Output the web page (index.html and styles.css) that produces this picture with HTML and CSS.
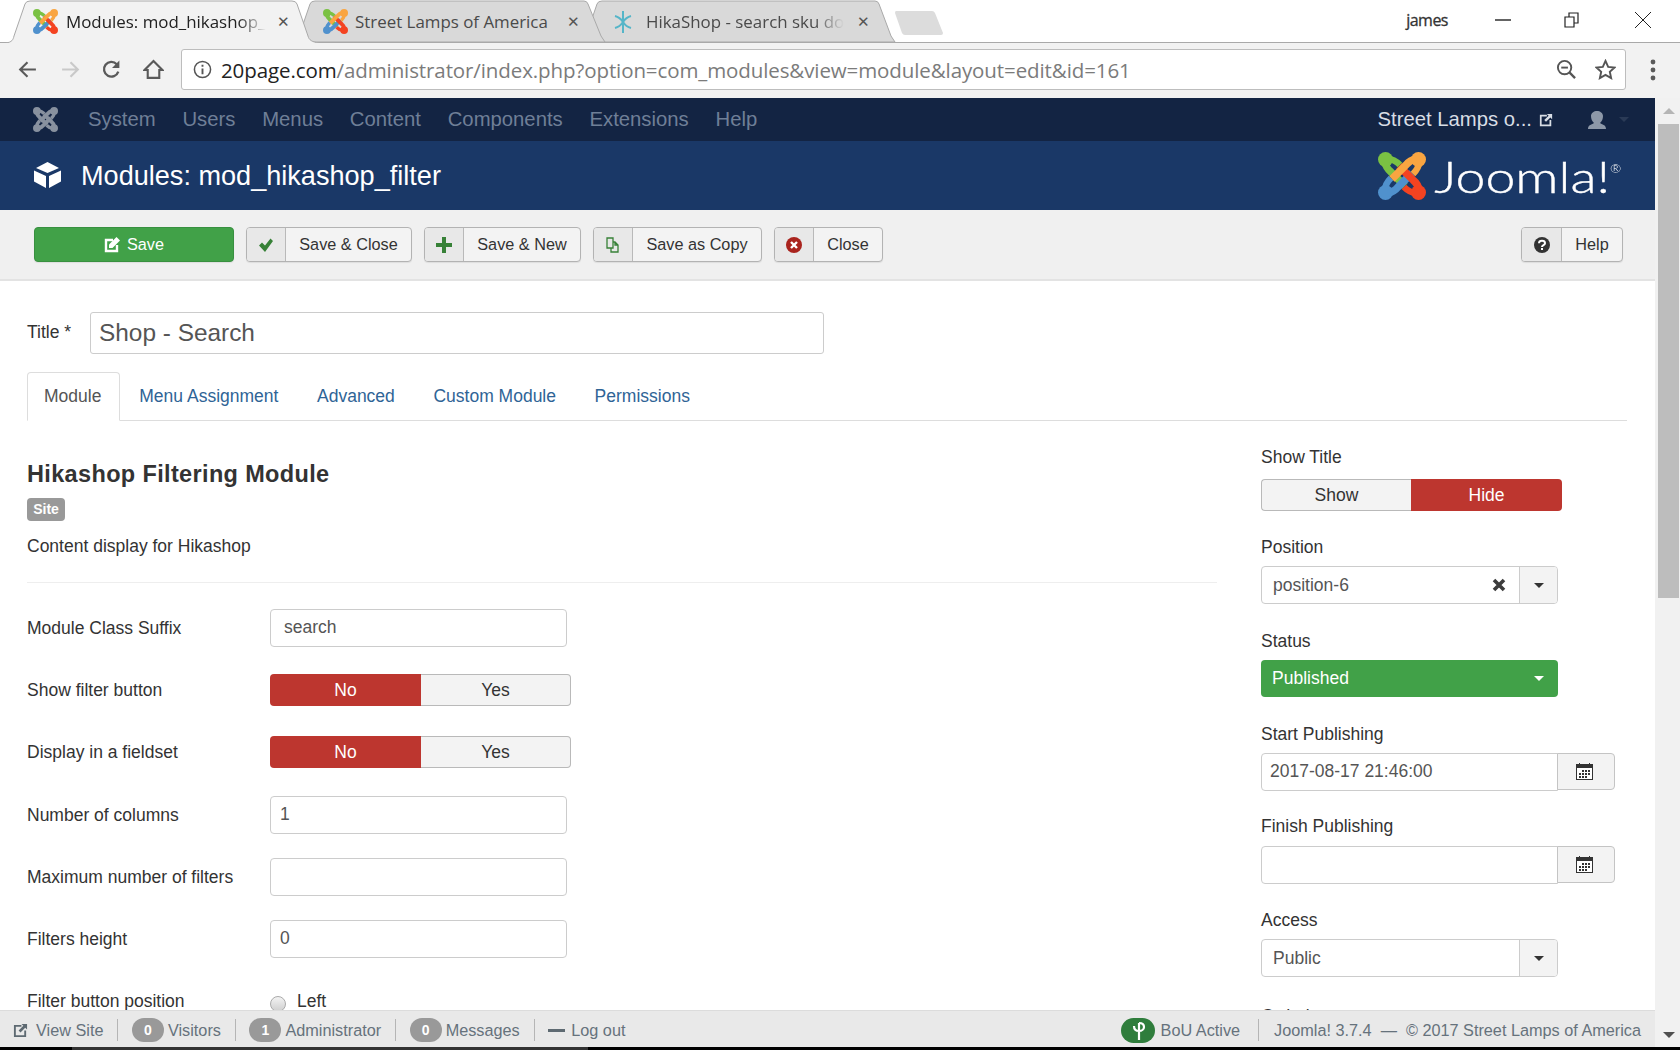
FILE: index.html
```html
<!DOCTYPE html>
<html lang="en">
<head>
<meta charset="utf-8">
<title>Modules: mod_hikashop_filter</title>
<link rel="stylesheet" href="styles.css">
</head>
<body>
<svg class="defs" width="0" height="0" aria-hidden="true">
  <symbol id="jpiece" viewBox="0 0 48 48">
    <circle cx="7.500" cy="7.500" r="7.500" fill="currentColor"/>
    <path d="M7 10 Q8 16 13 20 L27 34" fill="none" stroke="currentColor" stroke-width="7.500"/>
    <path d="M10 7 Q16 7 22 13" fill="none" stroke="currentColor" stroke-width="6.500"/>
  </symbol>
  <symbol id="jmark" viewBox="0 0 48 48">
    <g class="jm-a"><use href="#jpiece" width="48" height="48"/></g>
    <g class="jm-d" transform="rotate(270 24 24)"><use href="#jpiece" width="48" height="48"/></g>
    <g class="jm-c" transform="rotate(180 24 24)"><use href="#jpiece" width="48" height="48"/></g>
    <g class="jm-b" transform="rotate(90 24 24)"><use href="#jpiece" width="48" height="48"/></g>
  </symbol>
  <symbol id="cal" viewBox="0 0 17 17">
    <path fill="#333" d="M0 1h3V0h1v1h9V0h1v1h3v16H0z"/>
    <rect x="1" y="5" width="15" height="11" fill="#fff"/>
    <path fill="#333" d="M6 7h2v2H6zM9 7h2v2H9zM12 7h2v2h-2zM3 10h2v2H3zM6 10h2v2H6zM9 10h2v2H9zM12 10h2v2h-2zM3 13h2v2H3zM6 13h2v2H6zM9 13h2v2H9z"/>
  </symbol>
  <symbol id="ext" viewBox="0 0 16 16">
    <path fill="none" stroke="currentColor" stroke-width="2" d="M9 3H2v11h11V8"/>
    <path fill="currentColor" d="M9 1h6v6l-2-2-5 5-2-2 5-5z"/>
  </symbol>
</svg>

<header class="tabstrip">
  <div class="tab tab-first">
    <svg class="tab-shape" viewBox="0 0 313 43" preserveAspectRatio="none"><path d="M0 43 C6 42 7 40 8 36 L19 4 Q20 1 24 1 H286 Q290 1 291 4 L302 36 C303 40 306 42 313 43" fill="#f2f2f2" stroke="#a9a9a9"/></svg>
    <svg class="fav"><use href="#jmark"/></svg>
    <span class="tab-title dark">Modules: mod_hikashop_</span>
    <span class="tab-x">&#x2715;</span>
  </div>
  <div class="tab tab-second">
    <svg class="tab-shape" viewBox="0 0 312 43" preserveAspectRatio="none"><path d="M2 42 L15 4 Q16 1 20 1 H289 Q292 1 293 4 L306 36 L310 42 Z" fill="#d9d9d9" stroke="#a9a9a9"/></svg>
    <svg class="fav"><use href="#jmark"/></svg>
    <span class="tab-title">Street Lamps of America</span>
    <span class="tab-x">&#x2715;</span>
  </div>
  <div class="tab tab-third">
    <svg class="tab-shape" viewBox="0 0 315 43" preserveAspectRatio="none"><path d="M2 42 L15 4 Q16 1 20 1 H293 Q296 1 297 4 L309 36 L313 42 Z" fill="#d9d9d9" stroke="#a9a9a9"/></svg>
    <svg class="fav fav-star" viewBox="0 0 20 24"><path d="M10 1v22M2 6c4 1 6 3 8 6s4 5 8 6M18 6c-4 1-6 3-8 6s-4 5-8 6" fill="none" stroke="#55b5c8" stroke-width="2"/></svg>
    <span class="tab-title tab-fade">HikaShop - search sku do</span>
    <span class="tab-x">&#x2715;</span>
  </div>
  <svg class="newtab" viewBox="0 0 50 26"><path d="M2 1H38Q40 1 41 3L49 23Q49 25 47 25H11Q9 25 8 23L1 3Q1 1 2 1Z" fill="#dcdcdc"/></svg>
  <div class="winctl">
    <span class="james">james</span>
    <svg class="win-min" viewBox="0 0 16 16"><path d="M0 8h16" stroke="#222" stroke-width="1.400"/></svg>
    <svg class="win-max" viewBox="0 0 16 16"><path d="M1 5h9v10H1zM5 5V1h9v10h-4" fill="none" stroke="#222" stroke-width="1.200"/></svg>
    <svg class="win-close" viewBox="0 0 16 16"><path d="M0 0l16 16M16 0L0 16" stroke="#222" stroke-width="1"/></svg>
  </div>
</header>

<div class="omnibar">
  <svg class="nav-ic" viewBox="0 0 20 20"><path d="M18 10H3M10 3l-7 7 7 7" fill="none" stroke="#5a5a5a" stroke-width="2"/></svg>
  <svg class="nav-ic" viewBox="0 0 20 20"><path d="M2 10h15M10 3l7 7-7 7" fill="none" stroke="#c9c9c9" stroke-width="2"/></svg>
  <svg class="nav-ic" viewBox="0 0 20 20"><path d="M16.500 12a7 7 0 1 1-1.500-7" fill="none" stroke="#5a5a5a" stroke-width="2.200"/><path d="M17.500 1.500v7h-7z" fill="#5a5a5a"/></svg>
  <svg class="nav-ic" viewBox="0 0 20 20"><path d="M10 2L1.500 10.500H4.500V18H15.500V10.500H18.500Z" fill="none" stroke="#5a5a5a" stroke-width="2"/></svg>
  <div class="urlbox">
    <svg class="url-info" viewBox="0 0 20 20"><circle cx="10" cy="10" r="8.500" fill="none" stroke="#555" stroke-width="1.600"/><path d="M10 9v6M10 5v2" stroke="#555" stroke-width="2"/></svg>
    <span class="url"><span class="url-host">20page.com</span>/administrator/index.php?option=com_modules&amp;view=module&amp;layout=edit&amp;id=161</span>
    <svg class="url-ic" viewBox="0 0 22 22"><circle cx="9" cy="9" r="7" fill="none" stroke="#555" stroke-width="2"/><path d="M14 14l6 6" stroke="#555" stroke-width="2.400"/><path d="M5.500 9h7" stroke="#555" stroke-width="2"/></svg>
    <svg class="url-ic" viewBox="0 0 22 22"><path d="M11 2l2.800 6.200 6.700.7-5 4.500 1.400 6.600-5.900-3.400-5.900 3.400 1.400-6.600-5-4.500 6.700-.7z" fill="none" stroke="#555" stroke-width="2"/></svg>
  </div>
  <svg class="kebab" viewBox="0 0 6 24"><circle cx="3" cy="4" r="2.400"/><circle cx="3" cy="12" r="2.400"/><circle cx="3" cy="20" r="2.400"/></svg>
</div>

<div class="viewport">
  <div class="page">
    <nav class="topnav">
      <svg class="nav-mark"><use href="#jmark"/></svg>
      <ul class="menu">
        <li>System</li><li>Users</li><li>Menus</li><li>Content</li><li>Components</li><li>Extensions</li><li>Help</li>
      </ul>
      <div class="nav-right">
        <span class="site-link">Street Lamps o...</span>
        <svg class="site-ext"><use href="#ext"/></svg>
        <svg class="user-ic" viewBox="0 0 18 18"><path d="M0 18c0-4 3-4 6-6-2-2-3-4-3-7 0-3 3-5 6-5s6 2 6 5c0 3-1 5-3 7 3 2 6 2 6 6z" fill="#8d98a8"/></svg>
        <span class="user-caret"></span>
      </div>
    </nav>

    <div class="titlebar">
      <svg class="cube" viewBox="0 0 27 26"><path fill="#fff" d="M13.500 0L25 6 13.500 11 2 6zM0 8.500l12 5.500V26L0 19.500zM27 8.500L15 14V26l12-6.500z"/></svg>
      <h1 class="page-title">Modules: mod_hikashop_filter</h1>
      <div class="brand">
        <svg class="brand-mark"><use href="#jmark"/></svg>
        <span class="brand-word">Joomla!<sup class="brand-r">®</sup></span>
      </div>
    </div>

    <div class="actions">
      <button class="btn btn-save" type="button">
        <svg class="ic14" viewBox="0 0 16 16"><path fill="none" stroke="#fff" stroke-width="2.400" d="M9 3H2v11h11V8"/><path fill="#fff" d="M12.500 0L16 3.500 8.500 11H5V7.500z"/></svg>
        Save
      </button>
      <button class="btn btn-close-save" type="button"><span class="btn-ic"><svg class="ic16" viewBox="0 0 16 16"><path fill="#378137" d="M1 8.500l3-3 3 3 5.500-7L15 4 7 15z"/></svg></span><span class="btn-t">Save &amp; Close</span></button>
      <button class="btn btn-new" type="button"><span class="btn-ic"><svg class="ic16" viewBox="0 0 16 16"><path fill="#378137" d="M6 0h4v6h6v4h-6v6H6v-6H0V6h6z"/></svg></span><span class="btn-t">Save &amp; New</span></button>
      <button class="btn btn-copy" type="button"><span class="btn-ic"><svg class="ic16" viewBox="0 0 16 16"><path fill="none" stroke="#378137" stroke-width="1.300" d="M2 1h6v10H2zM8 5h2l3 3v7H6v-4M10 5v3h3"/></svg></span><span class="btn-t">Save as Copy</span></button>
      <button class="btn btn-close" type="button"><span class="btn-ic"><svg class="ic16" viewBox="0 0 16 16"><circle cx="8" cy="8" r="8" fill="#a9231d"/><path d="M5 5l6 6M11 5l-6 6" stroke="#fff" stroke-width="2.400"/></svg></span><span class="btn-t">Close</span></button>
      <button class="btn btn-help" type="button"><span class="btn-ic"><svg class="ic16" viewBox="0 0 16 16"><circle cx="8" cy="8" r="8" fill="#333"/><path d="M5 6.200C5 3 11 3 11 6.200 11 8.200 8 8 8 10" fill="none" stroke="#fff" stroke-width="2"/><rect x="7" y="11" width="2" height="2" fill="#fff"/></svg></span><span class="btn-t">Help</span></button>
    </div>

    <main class="content">
      <div class="title-row">
        <label class="title-label">Title *</label>
        <div class="title-input">Shop - Search</div>
      </div>

      <div class="tabs">
        <span class="ctab active">Module</span>
        <span class="ctab">Menu Assignment</span>
        <span class="ctab">Advanced</span>
        <span class="ctab">Custom Module</span>
        <span class="ctab">Permissions</span>
      </div>

      <div class="columns">
        <section class="col-main">
          <h3 class="mod-name">Hikashop Filtering Module</h3>
          <span class="badge-site">Site</span>
          <p class="mod-desc">Content display for Hikashop</p>
          <hr class="rule">
          <div class="form">
            <div class="row"><label>Module Class Suffix</label><div class="input pad-wide">search</div></div>
            <div class="row"><label>Show filter button</label><div class="toggle"><span class="seg on-no">No</span><span class="seg off">Yes</span></div></div>
            <div class="row"><label>Display in a fieldset</label><div class="toggle"><span class="seg on-no">No</span><span class="seg off">Yes</span></div></div>
            <div class="row row-shift"><label>Number of columns</label><div class="input">1</div></div>
            <div class="row"><label>Maximum number of filters</label><div class="input"></div></div>
            <div class="row"><label>Filters height</label><div class="input">0</div></div>
            <div class="row"><label>Filter button position</label><div class="radio-line"><span class="radio"></span><span>Left</span></div></div>
          </div>
        </section>

        <aside class="col-side">
          <div class="field"><div class="flabel flabel-toggle">Show Title</div>
            <div class="toggle"><span class="seg off">Show</span><span class="seg on-no">Hide</span></div></div>
          <div class="field field-wide"><div class="flabel">Position</div>
            <div class="select"><span class="sel-text">position-6</span><svg class="sel-x" viewBox="0 0 14 14"><path d="M2 2l10 10M12 2L2 12" stroke="#3c3c3c" stroke-width="3.600"/></svg><span class="sel-btn"><i class="caret"></i></span></div></div>
          <div class="field field-wide"><div class="flabel">Status</div>
            <div class="select-green"><span>Published</span><i class="caret caret-white"></i></div></div>
          <div class="field field-tight"><div class="flabel">Start Publishing</div>
            <div class="date"><div class="date-input">2017-08-17 21:46:00</div><span class="date-btn"><svg class="ic-cal"><use href="#cal"/></svg></span></div></div>
          <div class="field"><div class="flabel flabel-date">Finish Publishing</div>
            <div class="date"><div class="date-input"></div><span class="date-btn"><svg class="ic-cal"><use href="#cal"/></svg></span></div></div>
          <div class="field field-access"><div class="flabel">Access</div>
            <div class="select"><span class="sel-text">Public</span><span class="sel-btn"><i class="caret"></i></span></div></div>
          <div class="field"><div class="flabel">Ordering</div></div>
        </aside>
      </div>
    </main>
  </div>

  <div class="scrollbar">
    <span class="sb-up"></span>
    <span class="sb-thumb"></span>
    <span class="sb-down"></span>
  </div>

  <footer class="status">
    <svg class="st-ext"><use href="#ext"/></svg>
    <span class="st-text">View Site</span>
    <span class="st-sep"></span>
    <span class="st-badge">0</span><span class="st-text">Visitors</span>
    <span class="st-sep"></span>
    <span class="st-badge">1</span><span class="st-text">Administrator</span>
    <span class="st-sep"></span>
    <span class="st-badge">0</span><span class="st-text">Messages</span>
    <span class="st-sep"></span>
    <span class="st-minus"></span><span class="st-text">Log out</span>
    <span class="st-right">
      <svg class="bou" viewBox="0 0 34 25"><rect width="34" height="25" rx="12.500" fill="#2f7d3c"/><path d="M18 22V5M18 5c4 0 5 2 5 4s-2 4-5 4c-3 0-5-2-5-5" fill="none" stroke="#fff" stroke-width="2.200"/></svg>
      <span class="st-text">BoU Active</span>
      <span class="st-sep st-sep-right"></span>
      <span class="st-text">Joomla! 3.7.4 &nbsp;—&nbsp; © 2017 Street Lamps of America</span>
    </span>
  </footer>
</div>
<div class="taskbar"><span class="taskbar-seg"></span></div>
</body>
</html>
```

FILE: styles.css
```css
* { box-sizing: border-box; }
html, body { margin: 0; padding: 0; }
body {
  width: 1680px; height: 1050px; overflow: hidden;
  display: flex; flex-direction: column;
  font-family: "Liberation Sans", Arial, sans-serif;
  font-size: 17.500px; color: #333; background: #fff;
}
.defs { position: absolute; }
.jm-a { color: var(--a, #7ac143); }
.jm-b { color: var(--b, #f9a541); }
.jm-c { color: var(--c, #f44321); }
.jm-d { color: var(--d, #5091cd); }

/* browser tabs */
.tabstrip { height: 43px; flex: none; display: flex; align-items: stretch; background: #fff; position: relative; border-bottom: 1px solid #a9a9a9; padding-left: 6px; font-family: "Open Sans", sans-serif; }
.tab { position: relative; display: flex; align-items: center; height: 43px; }
.tab-shape { position: absolute; inset: 0; width: 100%; height: 100%; }
.tab > .fav, .tab > span { position: relative; }
.tab-first { width: 313px; padding-left: 27px; z-index: 3; }
.tab-second { width: 312px; margin-left: -24px; padding-left: 28px; z-index: 2; }
.tab-third { width: 315px; margin-left: -25px; padding-left: 31px; z-index: 1; }
.fav { width: 25px; height: 25px; flex: none; }
.fav-star { width: 20px; height: 24px; }
.tab-title { font-size: 16.900px; color: #4a4a4a; white-space: nowrap; margin-left: 9px; flex: none; }
.tab-title.dark { color: #222; margin-left: 8px; }
.tab-first .tab-title { width: 200px; -webkit-mask-image: linear-gradient(90deg, #000 86%, transparent); mask-image: linear-gradient(90deg, #000 86%, transparent); }
.tab-second .tab-title { width: 200px; margin-left: 7px; }
.tab-third .tab-title { width: 198px; margin-left: 13px; overflow: hidden; -webkit-mask-image: linear-gradient(90deg, #000 85%, transparent); mask-image: linear-gradient(90deg, #000 85%, transparent); }
.tab-x { font-family: "DejaVu Sans", sans-serif; font-size: 15px; color: #555; margin-left: 11px; }
.tab-second .tab-x { margin-left: 12px; }
.tab-third .tab-x { margin-left: 13px; }
.newtab { width: 50px; height: 26px; margin: 10px 0 0 -3px; flex: none; }
.winctl { margin-left: auto; display: flex; align-items: center; height: 40px; }
.james { font-family: "Open Sans", sans-serif; font-size: 16px; letter-spacing: -0.500px; color: #333; -webkit-text-stroke: 0.300px #333; margin-right: 47px; }
.win-min { width: 16px; height: 16px; margin-right: 53px; }
.win-max { width: 16px; height: 16px; margin-right: 55px; }
.win-close { width: 16px; height: 16px; margin-right: 29px; }

/* omnibar */
.omnibar { height: 55px; flex: none; background: #f2f2f2; display: flex; align-items: center; padding: 0 0 2px 17px; }
.nav-ic { width: 21px; height: 21px; flex: none; margin-right: 22px; }
.nav-ic:nth-child(2) { margin-right: 20px; }
.nav-ic:nth-child(3) { margin-right: 21px; }
.nav-ic:nth-child(4) { margin-right: 17px; }
.urlbox { width: 1445px; height: 41px; background: #fff; border: 1px solid #bdbdbd; border-radius: 3px; display: flex; align-items: center; padding: 0 9px 0 11px; margin-right: 24px; flex: none; }
.url-info { width: 19px; height: 19px; flex: none; margin-right: 9px; }
.url { font-family: "Open Sans", sans-serif; font-size: 20.500px; color: #7b7b7b; white-space: nowrap; flex: 1; letter-spacing: -0.100px; }
.url-host { color: #222; }
.url-ic { width: 21px; height: 21px; flex: none; margin-left: 18px; }
.kebab { width: 6px; height: 24px; fill: #5a5a5a; flex: none; }

/* viewport */
.viewport { flex: 1; min-height: 0; display: flex; position: relative; overflow: hidden; }
.page { width: 1655px; flex: none; display: flex; flex-direction: column; overflow: hidden; }
.scrollbar { width: 25px; flex: none; background: #f1f1f1; display: flex; flex-direction: column; align-items: center; padding-left: 2px; position: relative; }
.sb-up { height: 26px; flex: none; display: flex; align-items: center; }
.sb-up::before { content: ""; border: 6px solid transparent; border-top: 0; border-bottom: 6px solid #b5b5b5; }
.sb-thumb { width: 21px; height: 474px; background: #bdbdbd; flex: none; }
.sb-down { margin-top: auto; height: 25px; display: flex; align-items: center; }
.sb-down::before { content: ""; border: 6px solid transparent; border-bottom: 0; border-top: 6px solid #505050; }

/* admin nav */
.topnav { height: 43px; flex: none; background: #132443; display: flex; align-items: center; padding-left: 33px; }
.nav-mark { width: 25px; height: 25px; flex: none; --a: #88919f; --b: #88919f; --c: #88919f; --d: #88919f; }
.menu { list-style: none; margin: 0 0 0 30px; padding: 0; display: flex; gap: 26.800px; font-size: 20.300px; color: #6f7f97; }
.nav-right { margin-left: auto; display: flex; align-items: center; padding-right: 26px; color: #d8dde5; }
.site-link { font-size: 20.300px; }
.site-ext { width: 14px; height: 14px; margin-left: 7px; color: #d8dde5; }
.user-ic { width: 18px; height: 18px; margin-left: 35px; }
.user-caret { border: 5px solid transparent; border-bottom: 0; border-top: 5px solid #2a3a56; margin-left: 13px; }

/* title bar */
.titlebar { height: 69px; flex: none; background: #1a3867; display: flex; align-items: center; padding: 0 33px 0 34px; }
.cube { width: 27px; height: 26px; flex: none; margin-top: -2px; }
.page-title { margin: 0 0 0 20px; font-size: 27.100px; font-weight: 400; color: #fff; }
.brand { margin-left: auto; display: flex; align-items: center; padding-right: 1px; }
.brand-mark { width: 50px; height: 48px; margin-right: 41px; }
.brand-word { font-family: Lato, sans-serif; font-weight: 300; font-size: 44px; color: #fff; line-height: 48px; display: flex; -webkit-text-stroke: 0.400px #fff; transform: scaleX(1.220); transform-origin: right center; }
.brand-r { font-size: 11px; line-height: 1; margin-top: 11px; -webkit-text-stroke: 0; }

/* actions */
.actions { height: 71px; flex: none; background: #f0f0f0; border-bottom: 2px solid #e3e3e3; display: flex; align-items: flex-start; padding: 17px 32px 0 34px; font-size: 16.250px; }
.btn { height: 35px; padding: 0; margin: 0 13px 0 0; display: flex; align-items: stretch; font: inherit; color: #333; background: #f3f3f3; border: 1px solid #b3b3b3; border-radius: 4px; box-shadow: 0 1px 1px rgba(0,0,0,.08); }
.btn-save { width: 200px; margin-right: 12px; background: #41a148; border-color: #389040; color: #fff; align-items: center; justify-content: center; gap: 7px; }
.btn-ic { width: 39px; flex: none; display: flex; align-items: center; justify-content: center; background: #e8e8e8; border-right: 1px solid #b9b9b9; border-radius: 3px 0 0 3px; }
.btn-t { flex: 1; display: flex; align-items: center; justify-content: center; }
.ic14 { width: 16px; height: 16px; }
.ic16 { width: 16px; height: 16px; }
.btn-close-save { width: 166px; margin-right: 12px; }
.btn-new { width: 157px; margin-right: 12px; }
.btn-copy { width: 169px; margin-right: 12px; }
.btn-close { width: 109px; }
.btn-help { width: 102px; margin: 0 0 0 auto; }
.btn-help .btn-ic { width: 40px; }

/* content */
.content { flex: 1; padding: 0 28px 0 27px; background: #fff; color: #333; }
.title-row { display: flex; align-items: center; height: 41px; margin-top: 31px; }
.title-label { width: 63px; margin-top: -1px; }
.title-input { width: 734px; height: 42px; border: 1px solid #ccc; border-radius: 3px; padding-left: 8px; font-size: 24.400px; line-height: 40px; color: #555; }
.tabs { display: flex; height: 49px; margin-top: 19px; border-bottom: 1px solid #ddd; }
.ctab { padding: 0 19.300px; line-height: 49px; color: #2f6496; height: 49px; white-space: nowrap; }
.ctab.active { color: #555; background: #fff; border: 1px solid #ddd; border-bottom-color: #fff; border-radius: 4px 4px 0 0; padding: 0 16px; width: 93px; line-height: 47px; }

.columns { display: flex; gap: 44px; align-items: flex-start; }
.col-main { width: 1190px; flex: none; }
.mod-name { margin: 38px 0 0; font-size: 23.500px; line-height: 30px; font-weight: 700; color: #333; letter-spacing: 0.350px; }
.badge-site { display: block; width: 38px; height: 23px; margin-top: 9px; background: #999; border-radius: 4px; color: #fff; font-size: 14px; font-weight: 700; text-align: center; line-height: 23px; }
.mod-desc { margin: 13px 0 0; line-height: 24px; }
.rule { border: 0; border-top: 1px solid #eee; margin: 24px 0 0; }
.form { display: flex; flex-direction: column; gap: 24px; margin-top: 26px; }
.row { display: grid; grid-template-columns: 243px 1fr; align-items: center; height: 38px; }
.row-shift { margin-top: 1px; }
.input { width: 297px; height: 38px; border: 1px solid #ccc; border-radius: 4px; padding-left: 9px; line-height: 35px; color: #555; }
.pad-wide { padding-left: 13px; }
.toggle { width: 301px; height: 32px; display: flex; border-radius: 4px; }
.seg { flex: 1; display: flex; align-items: center; justify-content: center; font-size: 17.500px; }
.seg:first-child { border-radius: 4px 0 0 4px; flex: 0 0 151px; }
.col-side .seg:first-child { flex: 0 0 150px; }
.seg:last-child { border-radius: 0 4px 4px 0; }
.on-no { background: #bd362f; color: #fff; }
.off { background: #f3f3f3; color: #333; border: 1px solid #b9b9b9; }
.off:first-child { border-right: 0; }
.off:last-child { border-left: 0; }
.radio-line { display: flex; align-items: center; gap: 11px; }
.radio { width: 16px; height: 16px; border: 1px solid #aaa; border-radius: 50%; background: linear-gradient(#f3f3f3, #cfcfcf); margin-top: 6px; }

/* side */
.col-side { width: 366px; flex: none; padding-top: 25px; }
.field { margin-bottom: 25px; }
.field-wide { margin-bottom: 26px; }
.field-tight { margin-bottom: 24px; }
.field-access { margin-bottom: 28px; }
.flabel { line-height: 22px; margin-bottom: 8px; }
.flabel-toggle { margin-bottom: 11px; }
.flabel-date { margin-bottom: 9px; }
.select { width: 297px; height: 38px; border: 1px solid #ccc; border-radius: 4px; display: flex; align-items: center; padding-left: 11px; color: #555; background: #fff; }
.sel-text { flex: 1; }
.sel-x { width: 14px; height: 14px; margin-right: 13px; }
.sel-btn { width: 38px; height: 36px; background: #f3f3f3; border-left: 1px solid #ccc; border-radius: 0 3px 3px 0; display: flex; align-items: center; justify-content: center; }
.caret { display: block; border: 5px solid transparent; border-bottom: 0; border-top: 5px solid #333; }
.caret-white { border-top-color: #fff; margin-right: 14px; }
.select-green { width: 297px; height: 37px; background: #41a148; border-radius: 4px; display: flex; align-items: center; justify-content: space-between; padding-left: 11px; color: #fff; }
.date { display: flex; width: 354px; height: 38px; }
.date-input { width: 297px; height: 38px; border: 1px solid #ccc; border-radius: 4px 0 0 4px; padding-left: 8px; line-height: 35px; color: #555; }
.date-btn { width: 58px; height: 37px; background: #f3f3f3; border: 1px solid #c4c4c4; border-radius: 0 4px 4px 0; display: flex; align-items: center; justify-content: center; margin-left: -1px; padding-right: 3px; flex: none; }
.ic-cal { width: 17px; height: 17px; }

/* status bar */
.status { position: absolute; left: 0; bottom: 0; width: 1655px; height: 37px; background: #e9e9e9; border-top: 1px solid #dcdcdc; display: flex; align-items: center; padding: 2px 14px 0 13px; color: #66727c; white-space: nowrap; font-size: 16.250px; }
.st-ext { width: 15px; height: 15px; margin-right: 8px; color: #5e6a72; }
.st-sep { width: 1px; height: 22px; background: #b5b5b5; margin: 0 13.500px 0 14px; flex: none; }
.st-sep-right { margin: 0 15px 0 18px; }
.st-badge { width: 32px; height: 24px; background: #999; border-radius: 12px; color: #fff; font-weight: 700; font-size: 14px; display: flex; align-items: center; justify-content: center; margin-right: 4px; }
.st-minus { width: 17px; height: 3px; background: #5e6a72; margin-right: 6px; }
.st-right { margin-left: auto; display: flex; align-items: center; }
.bou { width: 34px; height: 25px; margin-right: 6px; }

.taskbar { height: 3px; flex: none; background: #000; padding-left: 72px; }
.taskbar-seg { display: block; width: 516px; height: 3px; background: #333; }
```
